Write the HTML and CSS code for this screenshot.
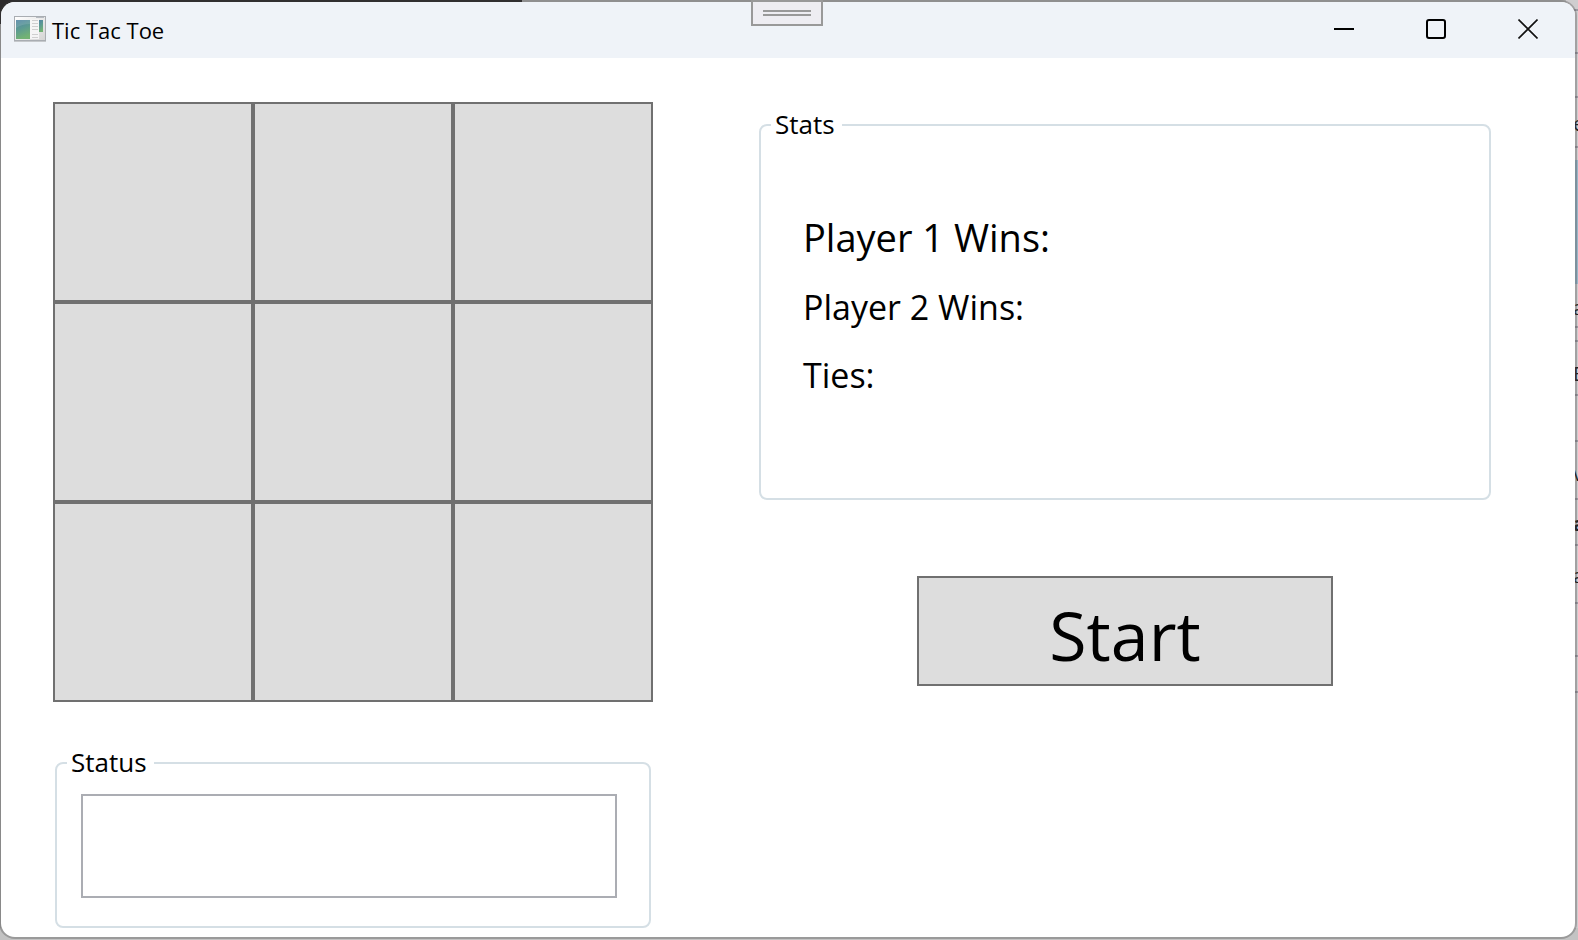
FILE: index.html
```html
<!DOCTYPE html>
<html lang="en">
<head>
<meta charset="utf-8">
<title>Tic Tac Toe</title>
<link rel="stylesheet" href="styles.css">
</head>
<body>
<div class="backdrop" aria-hidden="true">
  <div class="edge-top"></div>
  <div class="edge-right">
    <svg width="12" height="940" viewBox="0 0 12 940">
      <path d="M0 10H12M0 53H12M0 97H12M0 147H12M0 327H12M0 341H12M0 395H12M0 441H12M0 499H12M0 545H12M0 603H12M0 656H12M0 692H12" stroke="#9c9aa2" stroke-width="2"/>
      <g class="edge-text"><text x="7" y="131">e</text><text x="7" y="315">a</text><text x="7" y="381">E</text><text x="7" y="481">v</text><text x="7" y="531" font-weight="700">a</text><text x="7" y="583">a</text></g>
    </svg>
  </div>
  <div class="edge-bottom">
    <svg width="420" height="12" viewBox="0 0 420 12">
      <path d="M305 8L312 16M321 8L314 16" stroke="#555" stroke-width="2"/>
      <text class="edge-link" x="332" y="24">Recent</text>
    </svg>
  </div>
</div>
<div class="window">
  <header class="titlebar">
    <svg class="app-icon" width="32" height="26" viewBox="0 0 32 26" aria-hidden="true">
      <defs>
        <linearGradient id="pane" x1="0" y1="0" x2="0.3" y2="1"><stop offset="0" stop-color="#4f83a3"/><stop offset="0.5" stop-color="#5c9a93"/><stop offset="1" stop-color="#72b274"/></linearGradient>
        <linearGradient id="frame" x1="0" y1="0" x2="1" y2="1"><stop offset="0" stop-color="#ffffff"/><stop offset="1" stop-color="#d4d4d4"/></linearGradient>
      </defs>
      <rect x="0.5" y="0.5" width="31" height="24" fill="url(#frame)" stroke="#a9adb2"/>
      <path d="M0 25.5H32" stroke="#c5c8cb"/>
      <path d="M22 1.5H30" stroke="#b5bac0"/>
      <rect x="2" y="4" width="14" height="19" fill="url(#pane)"/>
      <path d="M2 12Q8 8 16 8V4H2Z" fill="#ffffff" opacity="0.12"/>
      <rect x="16" y="3" width="9" height="20" fill="#f5f5f5"/>
      <path d="M18 4.5H24M18 7.5H24M18 10.5H24M18 13.5H24M18 18.5H24M18 21.5H24" stroke="#cfcfcf"/>
      <rect x="25" y="4" width="4" height="12" fill="url(#pane)"/>
    </svg>
    <h1 class="title">Tic Tac Toe</h1>
    <div class="window-controls">
      <button class="control" type="button" aria-label="Minimize"><svg width="20" height="20" viewBox="0 0 20 20"><path d="M0 10H20" stroke="#000" stroke-width="2"/></svg></button>
      <button class="control" type="button" aria-label="Maximize"><svg width="20" height="20" viewBox="0 0 20 20"><rect x="1" y="1" width="18" height="18" rx="2" fill="none" stroke="#000" stroke-width="2"/></svg></button>
      <button class="control" type="button" aria-label="Close"><svg width="20" height="20" viewBox="0 0 20 20"><path d="M0.500 0.500L19.500 19.500M19.500 0.500L0.500 19.500" stroke="#111" stroke-width="1.600"/></svg></button>
    </div>
  </header>
  <main class="content">
    <section class="play">
      <div class="board">
        <button class="cell" type="button" aria-label="Row 1, column 1"></button>
        <button class="cell" type="button" aria-label="Row 1, column 2"></button>
        <button class="cell" type="button" aria-label="Row 1, column 3"></button>
        <button class="cell" type="button" aria-label="Row 2, column 1"></button>
        <button class="cell" type="button" aria-label="Row 2, column 2"></button>
        <button class="cell" type="button" aria-label="Row 2, column 3"></button>
        <button class="cell" type="button" aria-label="Row 3, column 1"></button>
        <button class="cell" type="button" aria-label="Row 3, column 2"></button>
        <button class="cell" type="button" aria-label="Row 3, column 3"></button>
      </div>
      <fieldset class="group status">
        <legend class="legend">Status</legend>
        <input class="status-box" type="text" aria-label="Status">
      </fieldset>
    </section>
    <section class="side">
      <fieldset class="group stats">
        <legend class="legend">Stats</legend>
        <p class="stat stat-first">Player 1 Wins:</p>
        <p class="stat">Player 2 Wins:</p>
        <p class="stat">Ties:</p>
      </fieldset>
      <button class="start" type="button">Start</button>
    </section>
  </main>
</div>
<button class="toolbar-grip" type="button" aria-label="Expand toolbar"><svg width="48" height="6" viewBox="0 0 48 6"><path d="M0 1H48M0 5H48" stroke="#999" stroke-width="2"/></svg></button>
</body>
</html>
```
FILE: styles.css
```css
* {
  box-sizing: border-box;
}

body {
  margin: 0;
  min-height: 100vh;
  display: flex;
  padding: 2px 3px 3px 1px;
  background: #ababab;
  color: #000;
  font-family: "Open Sans", "Noto Sans", sans-serif;
}

.backdrop {
  position: absolute;
  inset: 0;
  z-index: -1;
  overflow: hidden;
}

.edge-top {
  position: absolute;
  inset: 0 0 auto 0;
  height: 24px;
  background: linear-gradient(90deg, #2c2a2c 522px, #b4b4b4 522px);
}

.edge-right {
  position: absolute;
  inset: 0 0 0 auto;
  width: 12px;
  overflow: hidden;
  background: linear-gradient(#cfcdcf 160px, #9ab6c8 160px, #9ab6c8 284px, #cfcdcf 284px);
}

.edge-text {
  font-size: 20px;
  fill: #222;
}

.edge-bottom {
  position: absolute;
  inset: auto 0 0 0;
  height: 12px;
  overflow: hidden;
  background: #c3c3c3;
}

.edge-link {
  font-family: "DejaVu Sans", sans-serif;
  font-size: 20px;
  fill: #1c1c5c;
}

.window {
  flex: 1;
  display: flex;
  flex-direction: column;
  overflow: hidden;
  border-radius: 14px;
  background: #fff;
  box-shadow: 0 0 0 2px rgba(60, 60, 60, 0.3);
}

.titlebar {
  display: flex;
  height: 56px;
  padding-left: 13px;
  background: #eff3f8;
}

.app-icon {
  margin-top: 14px;
}

.title {
  flex: 1;
  margin: 13px 0 0 6px;
  font-size: 22px;
  line-height: 30px;
  font-weight: 400;
}

.window-controls {
  display: flex;
  margin-right: 1px;
}

.control {
  display: grid;
  place-items: center;
  width: 92px;
  height: 54px;
  padding: 0;
  border: 0;
  background: transparent;
}

.toolbar-grip {
  position: absolute;
  top: 0;
  left: 50%;
  display: grid;
  place-items: center;
  width: 72px;
  height: 26px;
  margin-left: -38px;
  padding: 0;
  border: 2px solid #999;
  background: #eeedf2;
}

.content {
  flex: 1;
  display: grid;
  grid-template-columns: 600px 1fr;
  column-gap: 106px;
  padding: 44px 84px 7px 52px;
}

.play {
  display: flex;
  flex-direction: column;
}

.board {
  display: grid;
  grid-template-columns: repeat(3, 1fr);
  aspect-ratio: 1;
}

.cell {
  padding: 0;
  border: 2px solid #707070;
  background: #ddd;
}

.group {
  min-width: 0;
  margin: 0;
  border: 2px solid #d5dfe5;
  border-radius: 8px;
}

.legend {
  padding: 0 7px 2px 4px;
  font-size: 26px;
  line-height: 34px;
}

.status {
  margin: 43px 2px 0;
  padding: 13px 32px 28px 24px;
}

.status .legend {
  margin-left: -14px;
}

.status-box {
  display: block;
  width: 100%;
  height: 104px;
  padding: 8px;
  border: 2px solid #abadb3;
  background: #fff;
  font: inherit;
  font-size: 34px;
}

.side {
  display: flex;
  flex-direction: column;
  align-items: center;
}

.stats {
  align-self: stretch;
  margin-top: 5px;
  padding: 58px 42px 89px;
}

.stats .legend {
  margin-left: -32px;
}

.stat {
  margin: 0;
  font-size: 34px;
  line-height: 68px;
}

.stat-first {
  font-size: 38px;
  line-height: 72px;
}

.start {
  width: 416px;
  height: 110px;
  margin-top: 76px;
  padding: 8px 0 0;
  border: 2px solid #707070;
  background: #ddd;
  font-family: inherit;
  font-size: 68px;
  line-height: 92px;
  color: #000;
}
```
